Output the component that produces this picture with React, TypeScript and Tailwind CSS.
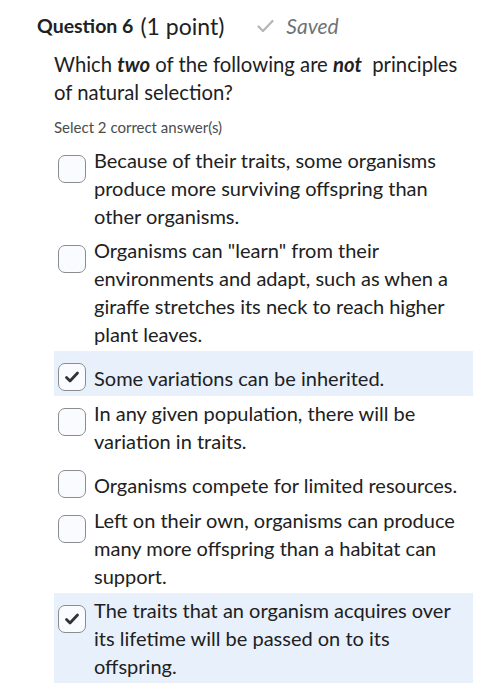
import React from "react";

type Opt = { text: string; checked: boolean; single?: boolean };

const options: Opt[] = [
  { text: "Because of their traits, some organisms produce more surviving offspring than other organisms.", checked: false },
  { text: 'Organisms can "learn" from their environments and adapt, such as when a giraffe stretches its neck to reach higher plant leaves.', checked: false },
  { text: "Some variations can be inherited.", checked: true, single: true },
  { text: "In any given population, there will be variation in traits.", checked: false },
  { text: "Organisms compete for limited resources.", checked: false, single: true },
  { text: "Left on their own, organisms can produce many more offspring than a habitat can support.", checked: false },
  { text: "The traits that an organism acquires over its lifetime will be passed on to its offspring.", checked: true },
];

function Box({ checked }: { checked: boolean }) {
  return (
    <div className="mt-[9px] ml-[4px] w-[28px] h-[28px] shrink-0 rounded-[7px] border-[1.5px] border-[#8a8d90] bg-[#f9fbff] flex items-center justify-center">
      {checked && (
        <svg width="16" height="16" viewBox="0 0 16 16">
          <path d="M2.5 8.5 L6 12 L13.5 4" fill="none" stroke="#303336" strokeWidth="2.8" strokeLinecap="round" strokeLinejoin="round" />
        </svg>
      )}
    </div>
  );
}

export default function App() {
  return (
    <div className="w-[502px] h-[700px] bg-white text-[#202122] overflow-hidden" style={{ fontFamily: "Lato, 'Noto Sans', sans-serif" }}>
      <div className="pl-[37px] pt-[12px] flex items-center h-[40px]">
        <span className="text-[19.5px] font-bold leading-[28px]">Question 6</span>
        <span className="text-[23px] ml-[7px] leading-[28px]">(1 point)</span>
        <svg className="ml-[33px]" width="17" height="14" viewBox="0 0 17 14">
          <path d="M1.5 7.5 L6 12 L15.5 2" fill="none" stroke="#b3b5b7" strokeWidth="2.2" strokeLinecap="round" strokeLinejoin="round" />
        </svg>
        <span className="text-[21px] italic text-[#6f7376] ml-[12px] leading-[28px]">Saved</span>
      </div>
      <div className="ml-[54px] w-[420px] mt-[10px] text-[20.3px] leading-[28px]">
        Which <b><i>two</i></b> of the following are <b><i>not</i></b>&nbsp; principles of natural selection?
      </div>
      <div className="pl-[54px] mt-[11px] text-[15px] text-[#494c4e] leading-[20px]">Select 2 correct answer(s)</div>
      <div className="ml-[54px] w-[419px] mt-[6px]">
        {options.map((o, i) => (
          <div key={i} className={`flex items-start py-[3px] ${o.single ? "min-h-[45px]" : ""} ${o.checked ? "bg-[#e8f0fb]" : ""}`}>
            <Box checked={o.checked} />
            <div className={`ml-[8px] pr-[12px] text-[20px] leading-[28px] ${o.single ? "pt-[10px]" : ""}`}>{o.text}</div>
          </div>
        ))}
      </div>
    </div>
  );
}
